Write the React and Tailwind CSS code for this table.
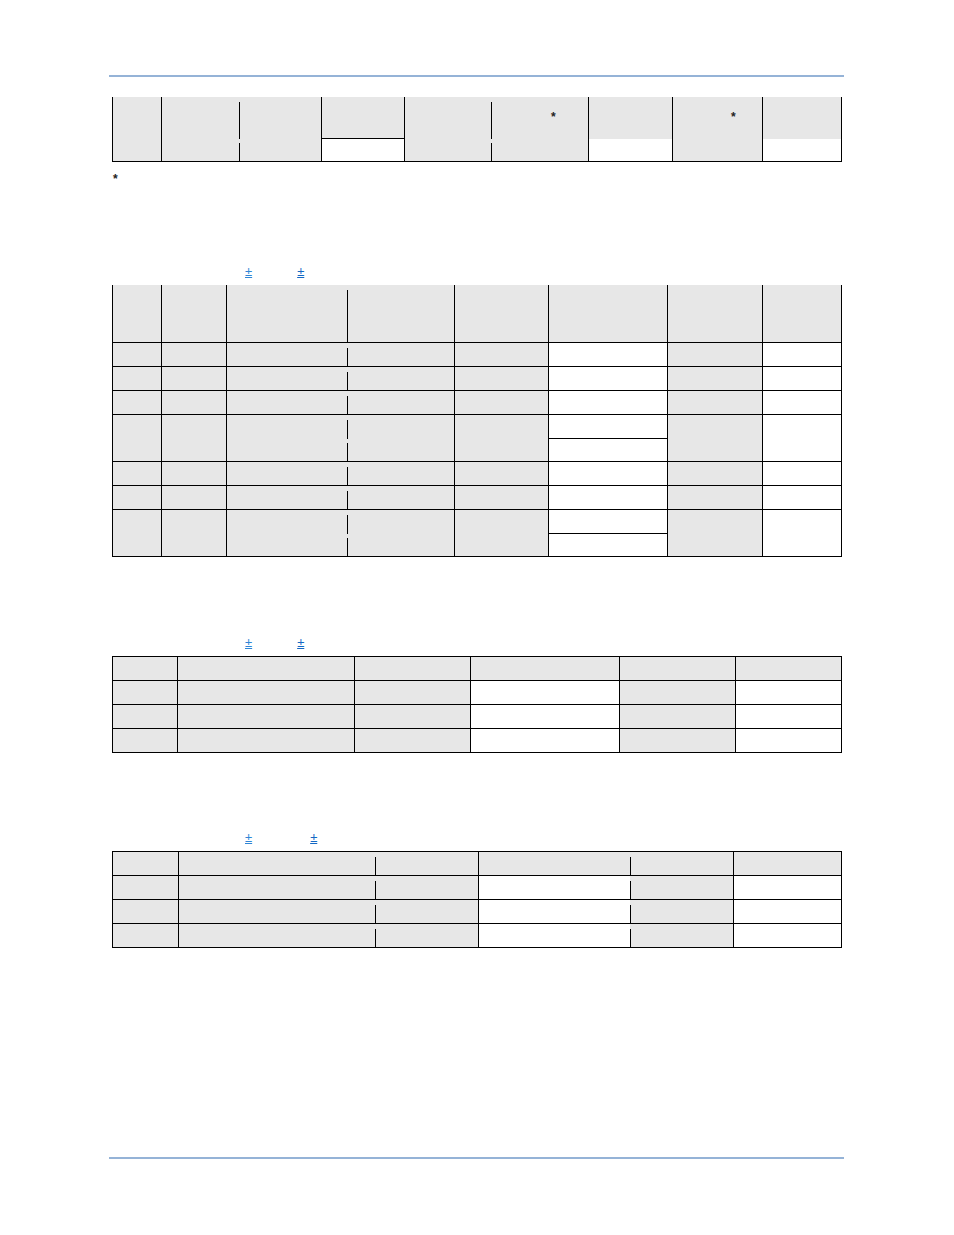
import React, { Fragment } from "react";

const GRAY = "bg-[#e7e7e7]";
const WHITE = "bg-white";

function Divider({ bg, top, gap2 }) {
  return (
    <div className={`w-px shrink-0 flex flex-col ${bg}`}>
      <div className="h-[5px] shrink-0" />
      {top ? (
        <>
          <div className={`${top} shrink-0 bg-black`} />
          <div className={`${gap2} shrink-0`} />
        </>
      ) : null}
      <div className="flex-1 bg-black" />
    </div>
  );
}

function Table({ cols, rows, topBorder }) {
  return (
    <div
      className={`ml-[112px] w-[730px] flex flex-col border-l border-black ${
        topBorder ? "border-t" : ""
      }`}
    >
      {rows.map((row, r) => (
        <div key={r} className={`flex ${row.h} border-b border-black`}>
          {cols.map((c, i) => {
            const bg = row.bgs[i];
            if (c.partial) {
              return (
                <Fragment key={i}>
                  <div className={`${c.w} shrink-0 ${bg}`} />
                  <Divider
                    bg={GRAY}
                    top={row.tall ? "h-[19px]" : null}
                    gap2="h-[4px]"
                  />
                </Fragment>
              );
            }
            if (row.tall && c.split) {
              return (
                <div
                  key={i}
                  className={`${c.w} shrink-0 border-r border-black flex flex-col`}
                >
                  <div className={`h-[24px] shrink-0 border-b border-black ${bg}`} />
                  <div className={`flex-1 ${bg}`} />
                </div>
              );
            }
            return (
              <div key={i} className={`${c.w} shrink-0 border-r border-black ${bg}`} />
            );
          })}
        </div>
      ))}
    </div>
  );
}

function PlusMinus({ gapClass }) {
  return (
    <div
      className={`flex h-[14px] pl-[245px] text-[13px] leading-[14px] ${gapClass}`}
    >
      <span className="underline text-[#2f86d6] decoration-[#2f86d6]">±</span>
      <span className="underline text-[#1368c4] decoration-[#1368c4]">±</span>
    </div>
  );
}

function Table1() {
  return (
    <div className="ml-[112px] w-[730px] h-[65px] flex border-l border-b border-black">
      <div className={`w-[49px] shrink-0 border-r border-black ${GRAY}`} />
      <div className={`w-[77px] shrink-0 ${GRAY}`} />
      <Divider bg={GRAY} top="h-[37px]" gap2="h-[4px]" />
      <div className={`w-[82px] shrink-0 border-r border-black ${GRAY}`} />
      <div className="w-[83px] shrink-0 border-r border-black flex flex-col">
        <div className={`h-[42px] shrink-0 border-b border-black ${GRAY}`} />
        <div className="flex-1 bg-white" />
      </div>
      <div className={`w-[86px] shrink-0 ${GRAY}`} />
      <Divider bg={GRAY} top="h-[37px]" gap2="h-[4px]" />
      <div
        className={`w-[97px] shrink-0 border-r border-black ${GRAY} pt-[14px] pl-[59px] text-[12px] leading-[13px] font-bold text-[#222]`}
      >
        *
      </div>
      <div className="w-[84px] shrink-0 border-r border-black flex flex-col">
        <div className={`h-[42px] shrink-0 ${GRAY}`} />
        <div className="flex-1 bg-white" />
      </div>
      <div
        className={`w-[90px] shrink-0 border-r border-black ${GRAY} pt-[14px] pl-[58px] text-[12px] leading-[13px] font-bold text-[#222]`}
      >
        *
      </div>
      <div className="w-[79px] shrink-0 border-r border-black flex flex-col">
        <div className={`h-[42px] shrink-0 ${GRAY}`} />
        <div className="flex-1 bg-white" />
      </div>
    </div>
  );
}

const t2cols = [
  { w: "w-[49px]" },
  { w: "w-[65px]" },
  { w: "w-[120px]", partial: true },
  { w: "w-[107px]" },
  { w: "w-[94px]" },
  { w: "w-[119px]", split: true },
  { w: "w-[95px]" },
  { w: "w-[79px]" },
];
const t2body = [GRAY, GRAY, GRAY, GRAY, GRAY, WHITE, GRAY, WHITE];
const t2head = [GRAY, GRAY, GRAY, GRAY, GRAY, GRAY, GRAY, GRAY];
const t2rows = [
  { h: "h-[58px]", bgs: t2head },
  { h: "h-[24px]", bgs: t2body },
  { h: "h-[24px]", bgs: t2body },
  { h: "h-[24px]", bgs: t2body },
  { h: "h-[47px]", bgs: t2body, tall: true },
  { h: "h-[24px]", bgs: t2body },
  { h: "h-[24px]", bgs: t2body },
  { h: "h-[47px]", bgs: t2body, tall: true },
];

const t3cols = [
  { w: "w-[65px]" },
  { w: "w-[177px]" },
  { w: "w-[116px]" },
  { w: "w-[149px]" },
  { w: "w-[116px]" },
  { w: "w-[106px]" },
];
const sixHead = [GRAY, GRAY, GRAY, GRAY, GRAY, GRAY];
const sixBody = [GRAY, GRAY, GRAY, WHITE, GRAY, WHITE];
const sixRows = [
  { h: "h-[24px]", bgs: sixHead },
  { h: "h-[24px]", bgs: sixBody },
  { h: "h-[24px]", bgs: sixBody },
  { h: "h-[24px]", bgs: sixBody },
];

const t4cols = [
  { w: "w-[66px]" },
  { w: "w-[196px]", partial: true },
  { w: "w-[103px]" },
  { w: "w-[151px]", partial: true },
  { w: "w-[103px]" },
  { w: "w-[108px]" },
];

export default function App() {
  return (
    <div className="w-[954px] min-h-[1235px] bg-white pt-[75px] font-['Liberation_Sans',Arial,sans-serif] text-black">
      <div className="ml-[109px] w-[735px] h-[2px] bg-[#95b3d7]" />

      <div className="mt-[20px]">
        <Table1 />
      </div>

      <div className="mt-[11px] ml-[113px] h-[13px] text-[12px] leading-[13px] font-bold text-[#222]">
        *
      </div>

      <div className="mt-[79px]">
        <PlusMinus gapClass="gap-[45px]" />
      </div>
      <div className="mt-[6px]">
        <Table cols={t2cols} rows={t2rows} />
      </div>

      <div className="mt-[79px]">
        <PlusMinus gapClass="gap-[45px]" />
      </div>
      <div className="mt-[6px]">
        <Table cols={t3cols} rows={sixRows} topBorder />
      </div>

      <div className="mt-[78px]">
        <PlusMinus gapClass="gap-[58px]" />
      </div>
      <div className="mt-[6px]">
        <Table cols={t4cols} rows={sixRows} topBorder />
      </div>

      <div className="mt-[209px] ml-[109px] w-[735px] h-[2px] bg-[#95b3d7]" />
    </div>
  );
}
